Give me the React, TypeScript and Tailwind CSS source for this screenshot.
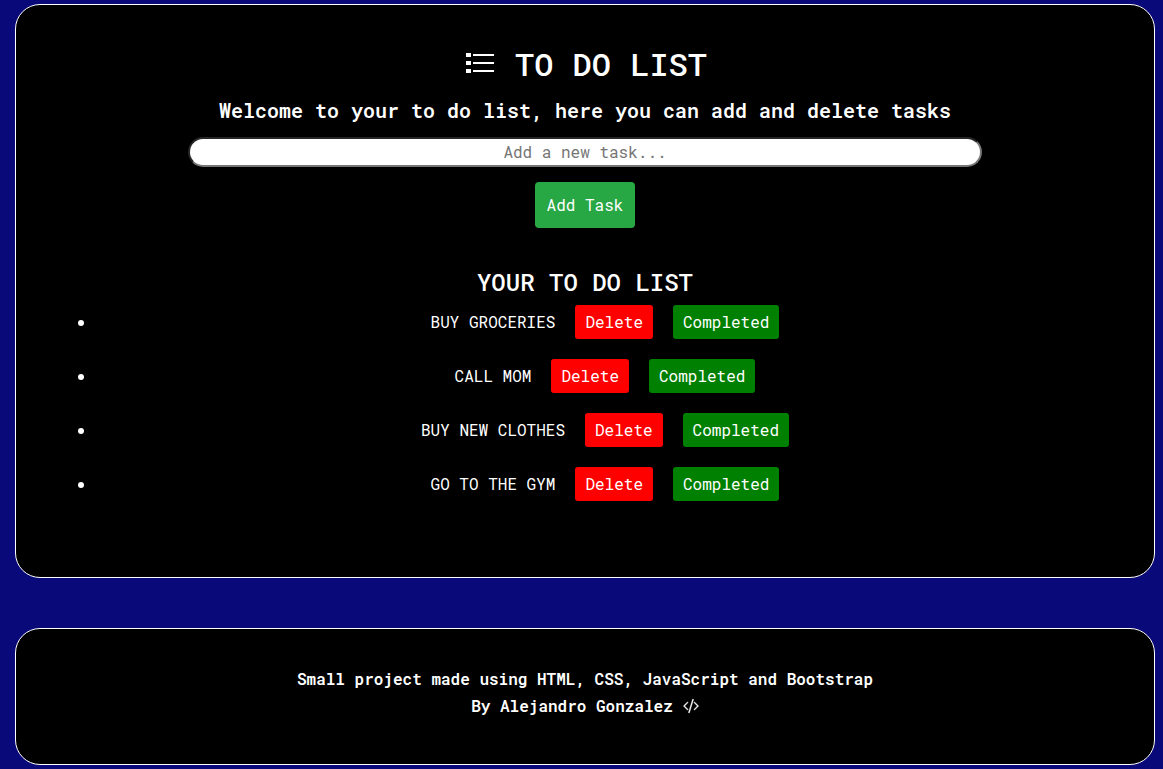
import { useState } from "react";
import type { FormEvent } from "react";
import { BsCodeSlash } from "react-icons/bs";

const initialTasks = ["BUY GROCERIES", "CALL MOM", "BUY NEW CLOTHES", "GO TO THE GYM"];

function ListIcon() {
  return (
    <svg viewBox="0 0 32 22" className="h-[22px] w-8" fill="currentColor" aria-hidden="true">
      <path d="M3 0h5v4H3zM3 8h5v4H3zM3 16h5v4H3z" />
      <path d="M10 1h21v2H10zM10 9h21v2H10zM10 17h21v2H10z" />
    </svg>
  );
}

export default function App() {
  const [tasks, setTasks] = useState(initialTasks);
  const [done, setDone] = useState<string[]>([]);
  const [text, setText] = useState("");

  const addTask = (event: FormEvent) => {
    event.preventDefault();
    if (text.trim()) setTasks([...tasks, text.trim().toUpperCase()]);
    setText("");
  };

  return (
    <div className="min-h-screen bg-[#09097a] pt-1 pr-2 pb-1 pl-[15px] font-['Roboto_Mono','DejaVu_Sans_Mono',monospace] text-base text-white">
      <main className="rounded-[25px] border border-white bg-black px-10 pt-[39px] pb-14 text-center">
        <h1 className="flex h-10 items-center justify-center gap-5 text-[32px] leading-10 font-medium">
          <ListIcon />
          <span>TO DO LIST</span>
        </h1>
        <h2 className="mt-2 text-xl leading-9 font-semibold">
          Welcome to your to do list, here you can add and delete tasks
        </h2>
        <form onSubmit={addTask} className="mt-[9px] flex flex-col items-center">
          <input
            aria-label="New task"
            value={text}
            onChange={(event) => setText(event.target.value)}
            placeholder="Add a new task..."
            className="h-[30px] w-3/4 rounded-[25px] border-2 border-t-[#262626] border-r-[#767676] border-b-[#767676] border-l-[#262626] bg-white pb-[2px] text-center text-black placeholder:text-[#757575]"
          />
          <button type="submit" className="mt-[15px] h-[46px] w-[100px] rounded bg-[#28a745]">
            Add Task
          </button>
        </form>
        <h3 className="mt-10 text-2xl leading-[29px] font-medium">YOUR TO DO LIST</h3>
        <ul className="mt-2 list-disc pl-10">
          {tasks.map((task, index) => (
            <li key={index} className="mb-5 leading-[34px]">
              <span className={done.includes(task) ? "line-through" : ""}>{task}</span>
              <button
                type="button"
                onClick={() => setTasks(tasks.filter((_, i) => i !== index))}
                className="mx-5 h-[34px] rounded-[3px] bg-[#ff0000] px-[10px]"
              >
                Delete
              </button>
              <button
                type="button"
                onClick={() => setDone([...done, task])}
                className="h-[34px] rounded-[3px] bg-[#008000] px-[10px]"
              >
                Completed
              </button>
            </li>
          ))}
        </ul>
      </main>
      <footer className="mt-[50px] rounded-[25px] border border-white bg-black px-10 pt-9 pb-[45px] text-center leading-[27px] font-semibold">
        <p>Small project made using HTML, CSS, JavaScript and Bootstrap</p>
        <p className="flex items-center justify-center gap-[10px]">
          By Alejandro Gonzalez <BsCodeSlash strokeWidth={0.4} aria-hidden="true" />
        </p>
      </footer>
    </div>
  );
}
